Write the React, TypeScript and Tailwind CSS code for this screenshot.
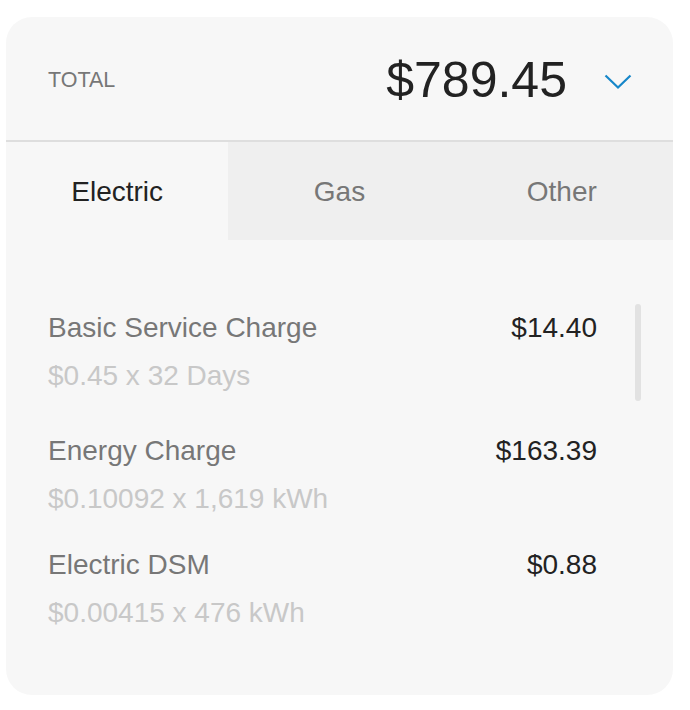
import { useState } from 'react'

const tabs = ['Electric', 'Gas', 'Other']

const charges = [
  { name: 'Basic Service Charge', detail: '$0.45 x 32 Days', amount: '$14.40', mt: 'mt-0' },
  { name: 'Energy Charge', detail: '$0.10092 x 1,619 kWh', amount: '$163.39', mt: 'mt-[27px]' },
  { name: 'Electric DSM', detail: '$0.00415 x 476 kWh', amount: '$0.88', mt: 'mt-[18px]' },
]

export default function App() {
  const [active, setActive] = useState(0)

  return (
    <div className="min-h-[710px] bg-white pt-[17px] pl-[6px] font-[family-name:'Liberation_Sans',Arial,sans-serif]">
      <div className="w-[667px] h-[678px] bg-[#f7f7f7] rounded-[26px] overflow-hidden flex flex-col">
        <div className="h-[125px] shrink-0 flex items-center pl-[42px] pr-[41px] border-b-2 border-[#dedede]">
          <span className="text-[21.5px] text-[#777] pt-[3px]">TOTAL</span>
          <span className="ml-auto text-[50px] text-[#222] leading-none pt-[2px]">$789.45</span>
          <svg width="28" height="16" viewBox="0 0 28 16" className="ml-[37px] mt-[6px]">
            <path d="M1.5 1.5 L14 13.5 L26.5 1.5" fill="none" stroke="#1787c9" strokeWidth="2.2" />
          </svg>
        </div>

        <div className="h-[98px] shrink-0 grid grid-cols-3">
          {tabs.map((t, i) => (
            <button
              key={t}
              onClick={() => setActive(i)}
              className={
                'flex items-center justify-center text-[28px] pt-[2px] ' +
                (i === active ? 'bg-[#f7f7f7] text-[#222]' : 'bg-[#efefef] text-[#777]')
              }
            >
              {t}
            </button>
          ))}
        </div>

        <div className="relative flex-1 pt-[64px] pl-[42px] pr-[76px]">
          {charges.map((c) => (
            <div key={c.name} className={c.mt}>
              <div className="flex items-center justify-between h-[48px]">
                <span className="text-[28px] text-[#777]">{c.name}</span>
                <span className="text-[28px] text-[#222]">{c.amount}</span>
              </div>
              <div className="flex items-center h-[48px] text-[28px] text-[#c8c8c8]">
                {c.detail}
              </div>
            </div>
          ))}
          <div className="absolute left-[629px] top-[64px] w-[6px] h-[97px] rounded-full bg-[#e2e2e2]" />
        </div>
      </div>
    </div>
  )
}
